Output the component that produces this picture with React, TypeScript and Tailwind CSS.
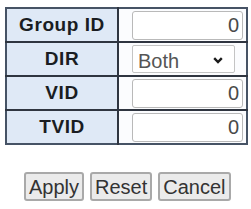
import { useState } from 'react';

const rows = [
    { label: 'Group ID', kind: 'input', value: '0' },
    { label: 'DIR', kind: 'select', value: 'Both' },
    { label: 'VID', kind: 'input', value: '0' },
    { label: 'TVID', kind: 'input', value: '0' },
];

const App = () => {
    const [dir, setDir] = useState('Both');

    return <div className="w-[251px] h-[209px] bg-white pt-[7px] pl-[5px] font-['Liberation_Sans',Arial,sans-serif]">
        <table className="w-[243px] border-collapse border-2 border-[#465365]">
            <tbody>
                {rows.map((r) => (
                    <tr key={r.label} className="h-[34px] border-b-2 border-[#2f3540] last:border-b-0">
                        <td className="w-[112px] bg-[#dfe9f6] border-r-2 border-[#2f3540] text-center text-[19px] font-bold text-[#1a1d22] tracking-[0.03em] p-0">{r.label}</td>
                        <td className="bg-[#fbfcfe] pl-[13px] pr-[3px] p-0">
                            {r.kind === 'input' ? (
                                <input readOnly value={r.value} className="block w-[111px] h-[29px] border border-[#b9b9b9] rounded-[3px] bg-white text-right pr-[3px] text-[20px] text-[#4a4a4a] outline-none" />
                            ) : (
                                <div className="relative w-[103px] h-[28px]">
                                    <select value={dir} onChange={(e) => setDir(e.target.value)} className="appearance-none block w-full h-full border border-[#c4c4c4] rounded-[2px] bg-white pl-[5px] text-[20px] text-[#555] outline-none">
                                        <option>Both</option>
                                        <option>Ingress</option>
                                        <option>Egress</option>
                                    </select>
                                    <svg className="absolute right-[12px] top-[12px] pointer-events-none" width="10" height="7" viewBox="0 0 10 7">
                                        <path d="M1.2 1.2 L5 5 L8.8 1.2" fill="none" stroke="#1a1a1a" strokeWidth="2.4" />
                                    </svg>
                                </div>
                            )}
                        </td>
                    </tr>
                ))}
            </tbody>
        </table>
        <div className="flex gap-[6px] mt-[27px] ml-[19px]">
            <button className="h-[29px] px-[3px] bg-[#ebebeb] border-2 border-[#a9a9a9] rounded-[3px] text-[20px] text-[#333] leading-none">Apply</button>
            <button className="h-[29px] px-[3px] bg-[#ebebeb] border-2 border-[#a9a9a9] rounded-[3px] text-[20px] text-[#333] leading-none">Reset</button>
            <button className="h-[29px] px-[3px] bg-[#ebebeb] border-2 border-[#a9a9a9] rounded-[3px] text-[20px] text-[#333] leading-none">Cancel</button>
        </div>
    </div>
}

export default App;
